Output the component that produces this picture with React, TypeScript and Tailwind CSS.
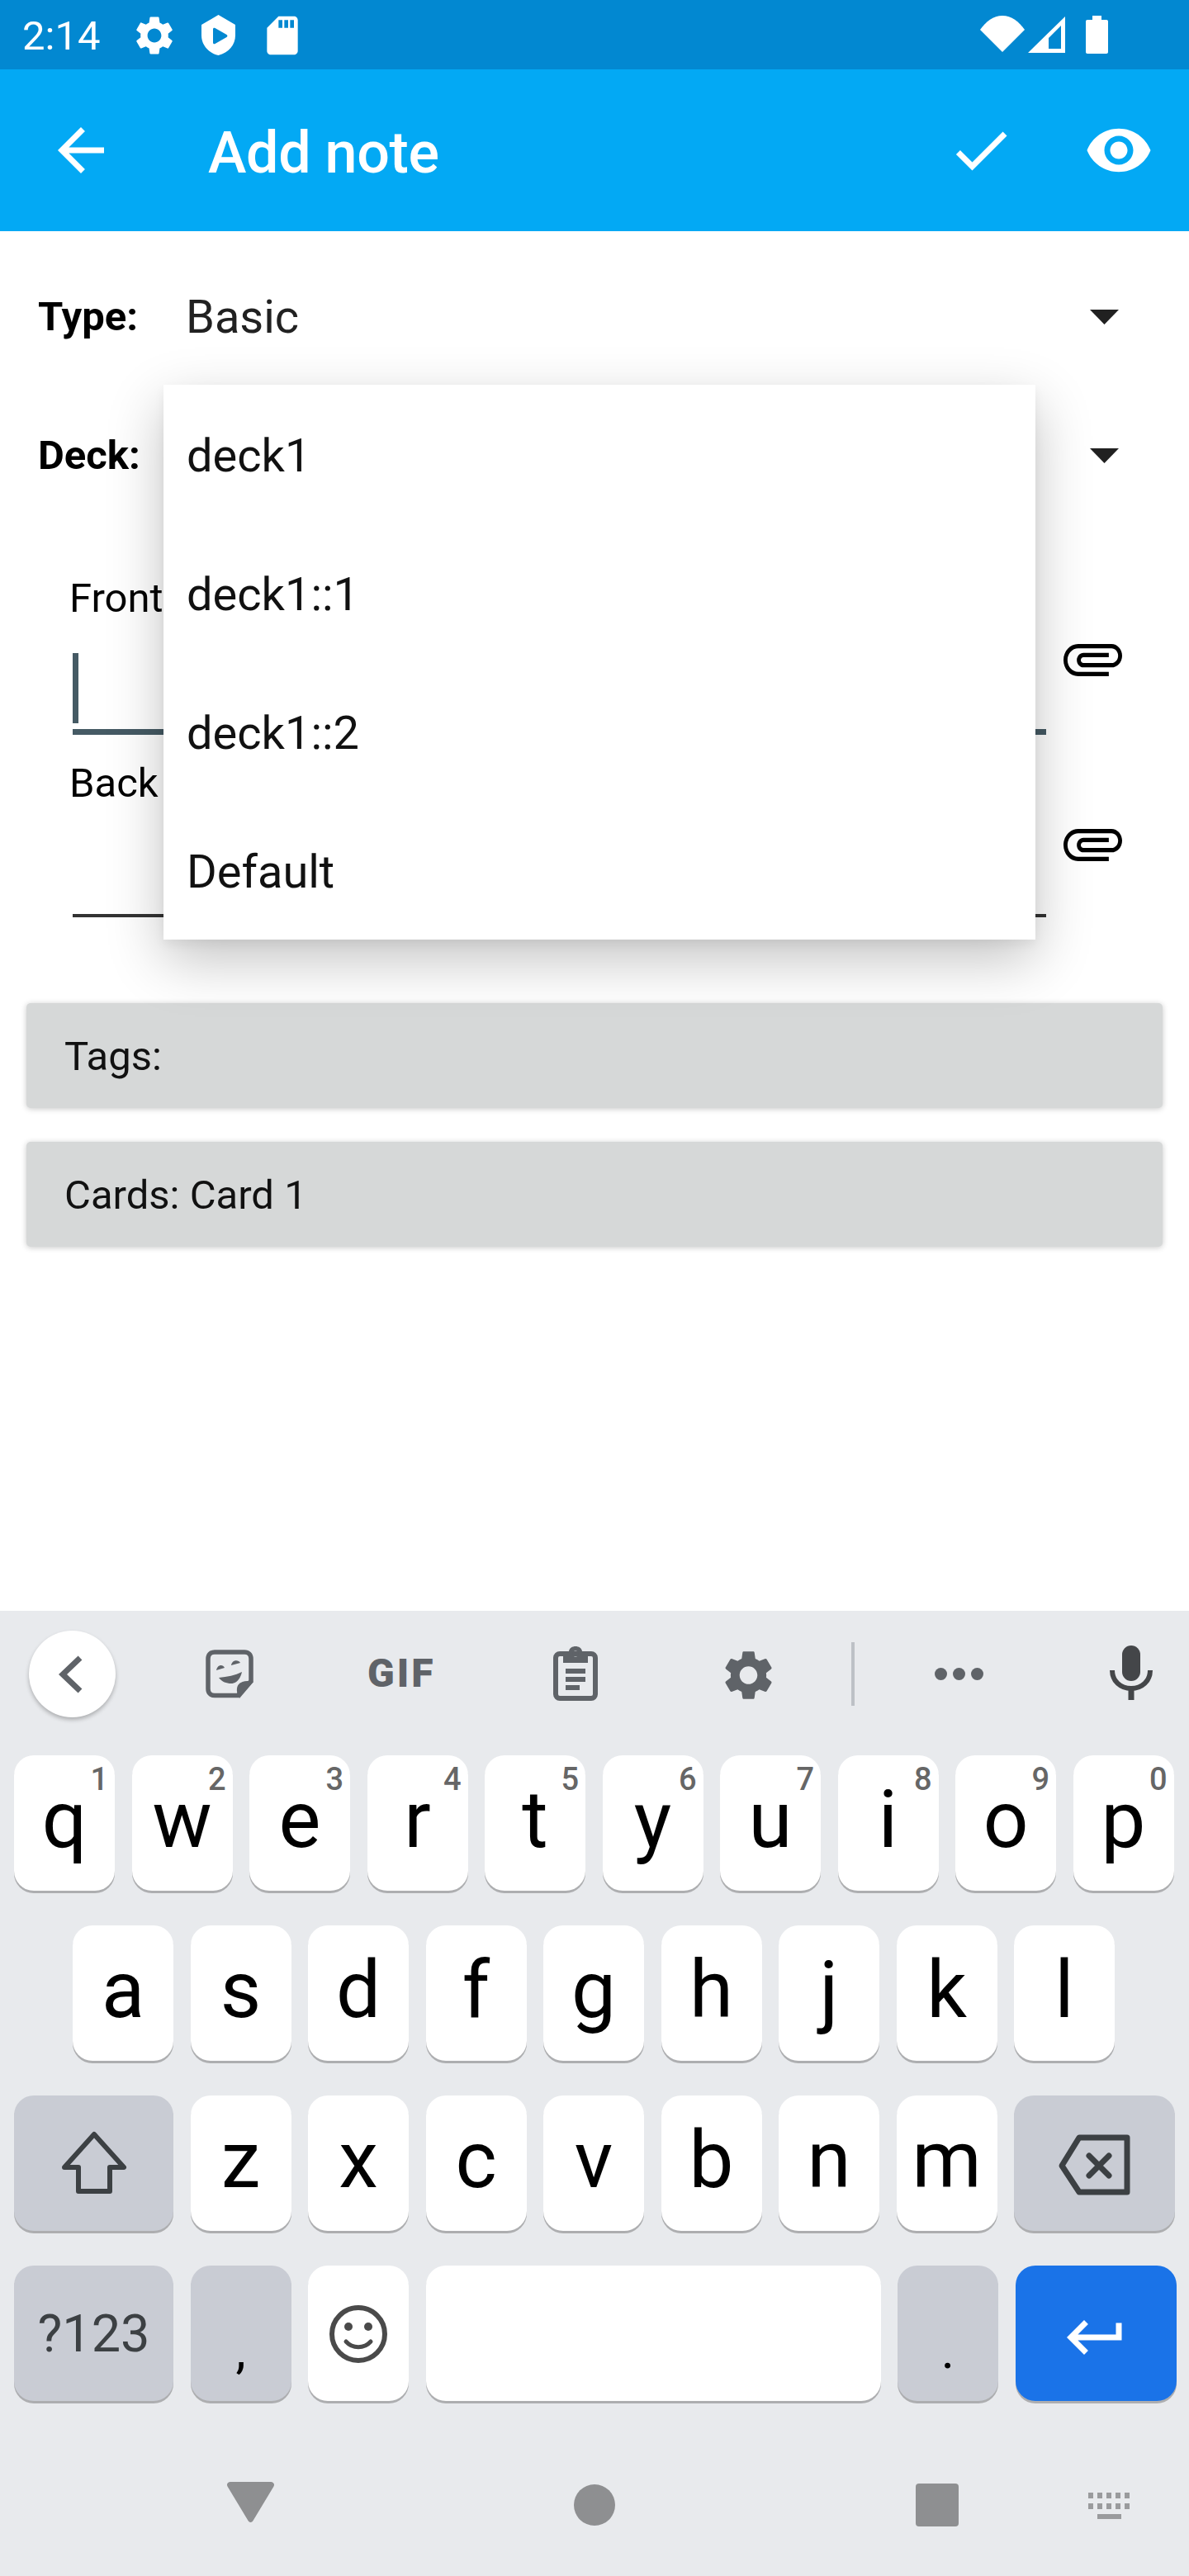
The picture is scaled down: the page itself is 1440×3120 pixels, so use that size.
import React from "react";

const GEAR =
  "M19.14 12.94c.04-.3.06-.61.06-.94 0-.32-.02-.64-.07-.94l2.03-1.58c.18-.14.23-.41.12-.61l-1.92-3.32c-.12-.22-.37-.29-.59-.22l-2.39.96c-.5-.38-1.03-.7-1.62-.94l-.36-2.54c-.04-.24-.24-.41-.48-.41h-3.84c-.24 0-.43.17-.47.41l-.36 2.54c-.59.24-1.13.57-1.62.94l-2.39-.96c-.22-.08-.47 0-.59.22L2.74 8.87c-.12.21-.08.47.12.61l2.03 1.58c-.05.3-.09.63-.09.94s.02.64.07.94l-2.03 1.58c-.18.14-.23.41-.12.61l1.92 3.32c.12.22.37.29.59.22l2.39-.96c.5.38 1.03.7 1.62.94l.36 2.54c.05.24.24.41.48.41h3.84c.24 0 .44-.17.47-.41l.36-2.54c.59-.24 1.13-.56 1.62-.94l2.39.96c.22.08.47 0 .59-.22l1.92-3.32c.12-.22.07-.47-.12-.61l-2.01-1.58zM12 15.6c-1.98 0-3.6-1.62-3.6-3.6s1.62-3.6 3.6-3.6 3.6 1.62 3.6 3.6-1.62 3.6-3.6 3.6z";
const ATTACH =
  "M16.5 6v11.5c0 2.21-1.79 4-4 4s-4-1.79-4-4V5c0-1.38 1.12-2.5 2.5-2.5s2.5 1.12 2.5 2.5v10.5c0 .55-.45 1-1 1s-1-.45-1-1V6H10v9.5c0 1.38 1.12 2.5 2.5 2.5s2.5-1.12 2.5-2.5V5c0-2.21-1.79-4-4-4S7 2.79 7 5v12.5c0 3.04 2.46 5.5 5.5 5.5s5.5-2.46 5.5-5.5V6h-1.5z";

function Attach({ className }: { className: string }) {
  return (
    <svg viewBox="1 7 22 11" preserveAspectRatio="none" className={className} fill="#000">
      <path d={ATTACH} transform="rotate(90 12 12)" />
    </svg>
  );
}

function StatusBar() {
  return (
    <div className="h-[84px] bg-[#0288d1] flex items-center text-white">
      <span className="ml-[27px] w-[132px] pt-[4px] text-[49px] leading-[80px]">2:14</span>
      <svg viewBox="0 0 24 24" className="w-[56px] h-[56px] fill-white mt-[1px]"><path d={GEAR} /></svg>
      <svg viewBox="0 0 41 49" className="ml-[29px] w-[41px] h-[49px] mt-[1px] fill-white">
        <path
          fillRule="evenodd"
          d="M20.5 0L41 12v13c0 11-8 21-20.5 24C8 46 0 36 0 25V12zM14 15.5v18c0 1.6 1.2 2.2 2.5 1.4l14-8c1.2-.8 1.2-2 0-2.8l-14-8c-1.3-.8-2.500-.2-2.500 1.4z"
        />
      </svg>
      <svg viewBox="0 0 24 24" className="ml-[29px] w-[56px] h-[56px] mt-[1px] fill-white">
        <path d="M18 2h-8L4.02 8 4 20c0 1.1.9 2 2 2h12c1.1 0 2-.9 2-2V4c0-1.1-.9-2-2-2zm-6 6h-2V4h2v4zm3 0h-2V4h2v4zm3 0h-2V4h2v4z" />
      </svg>
      <div className="ml-auto mr-[98px] flex items-center">
        <svg viewBox="0 0 54 44" className="w-[54px] h-[44px] fill-white -mt-[2px]">
          <path d="M27 44L0 17C7 7 16 0 27 0s20 7 27 17z" />
        </svg>
        <svg viewBox="0 0 45 44" className="ml-[4px] w-[45px] h-[44px] fill-white">
          <path fillRule="evenodd" d="M0 44L45 0v44zM25 26v13h15V11z" />
        </svg>
        <svg viewBox="0 0 27 46" className="ml-[25px] w-[27px] h-[46px] fill-white">
          <path d="M8 0h11v5h6c1.2 0 2 .8 2 2v37c0 1.2-.8 2-2 2H2c-1.2 0-2-.8-2-2V7c0-1.200.8-2 2-2h6z" />
        </svg>
      </div>
    </div>
  );
}

function Toolbar() {
  return (
    <div className="h-[196px] bg-[#03a9f4] flex items-center text-white">
      <svg viewBox="0 0 24 24" className="ml-[56px] w-[84px] h-[84px] fill-white">
        <path d="M20 11H7.83l5.59-5.59L12 4l-8 8 8 8 1.41-1.41L7.83 13H20v-2z" />
      </svg>
      <span className="ml-[112px] pt-[6px] text-[70px] font-medium leading-none tracking-[-0.3px]">Add note</span>
      <svg viewBox="0 0 24 24" className="ml-auto w-[84px] h-[84px] fill-white">
        <path d="M9 16.17L4.83 12l-1.42 1.41L9 19 21 7l-1.41-1.41z" />
      </svg>
      <svg viewBox="0 0 24 24" className="ml-[83px] mr-[43px] w-[84px] h-[84px] fill-white">
        <path d="M12 4.5C7 4.5 2.73 7.61 1 12c1.73 4.39 6 7.5 11 7.5s9.27-3.11 11-7.5c-1.73-4.39-6-7.5-11-7.5zM12 17c-2.76 0-5-2.24-5-5s2.24-5 5-5 5 2.24 5 5-2.24 5-5 5zm0-8c-1.66 0-3 1.34-3 3s1.34 3 3 3 3-1.34 3-3-1.34-3-3-3z" />
      </svg>
    </div>
  );
}

function SpinnerRow({ label, value }: { label: string; value?: string }) {
  return (
    <div className="h-[168px] flex items-center pl-[46px] pt-[4px]">
      <span className="w-[179px] text-[49px] font-bold text-black">{label}</span>
      <span className="text-[56px] text-[#212121]">{value}</span>
      <svg viewBox="0 0 35 18" className="ml-auto mr-[85px] w-[35px] h-[18px] fill-[#212121]">
        <path d="M0 0h35L17.5 18z" />
      </svg>
    </div>
  );
}

function NoteForm() {
  return (
    <div className="h-[1671px] bg-white relative pt-[18px]">
      <SpinnerRow label="Type:" value="Basic" />
      <SpinnerRow label="Deck:" />

      <div className="mt-[62px] pl-[84px] text-[49px] leading-[57px] text-black">Front</div>
      <div className="flex pl-[88px]">
        <div className="w-[1179px] h-[137px] border-b-[7px] border-[#455a64]">
          <div className="mt-[38px] w-[7px] h-[85px] bg-[#455a64]" />
        </div>
        <Attach className="ml-[21px] mt-[27px] w-[71px] h-[39px]" />
      </div>

      <div className="mt-[30px] pl-[84px] text-[49px] leading-[57px] text-black">Back</div>
      <div className="flex pl-[88px]">
        <div className="w-[1179px] h-[134px] border-b-[4px] border-[#333]" />
        <Attach className="ml-[21px] mt-[27px] w-[71px] h-[39px]" />
      </div>

      <div className="mt-[104px] mx-[32px] h-[127px] rounded-[5px] bg-[#d6d8d8] shadow-[0_1px_7px_rgba(0,0,0,0.22)] flex items-center pl-[46px] pt-[3px] text-[49px] text-[#111]">
        Tags:
      </div>
      <div className="mt-[41px] mx-[32px] h-[127px] rounded-[5px] bg-[#d6d8d8] shadow-[0_1px_7px_rgba(0,0,0,0.22)] flex items-center pl-[46px] pt-[3px] text-[49px] text-[#111]">
        Cards: Card 1
      </div>

      {/* dropdown sits over the form */}
      <div className="absolute left-[198px] top-[186px] w-[1056px] bg-white shadow-[0_24px_64px_rgba(0,0,0,0.24),0_6px_12px_rgba(0,0,0,0.05)]">
        {["deck1", "deck1::1", "deck1::2", "Default"].map((d) => (
          <div key={d} className="h-[168px] flex items-center pl-[28px] pr-[28px] pt-[4px] text-[56px] text-[#111]">
            {d}
          </div>
        ))}
      </div>
    </div>
  );
}

function SuggestStrip() {
  return (
    <div className="h-[175px] flex items-start pt-[38px]">
      <div className="ml-[35px] -mt-[14px] w-[105px] h-[105px] rounded-full bg-white shadow-[0_3px_5px_rgba(0,0,0,0.25)] flex items-center justify-center">
        <svg viewBox="0 0 30 46" className="w-[30px] h-[46px] -ml-[3px]" fill="none" stroke="#5f6368" strokeWidth="7">
          <path d="M26 3L5 23l21 20" />
        </svg>
      </div>
      {/* sticker */}
      <svg viewBox="0 0 60 60" className="ml-[109px] mt-[9px] w-[60px] h-[60px]" fill="none">
        <path
          d="M11 3h36c5 0 8 3 8 8v27L39 55.500H11c-5 0-8-3-8-8V11c0-5 3-8 8-8z"
          stroke="#5f6368"
          strokeWidth="5.500"
        />
        <path d="M58 39L41 59C37 52 37 46 40 42C44 38 50 37 58 39z" fill="#5f6368" />
        <path d="M16 34C26 33 36 31 44 27C42 36 37 41 31 41C25 41 20 39 16 34z" fill="#5f6368" />
        <path d="M13 25C14 18 21 17 23 22zM31 19C32 12 40 12 42 16z" fill="#5f6368" />
      </svg>
      <span className="ml-[136px] -mt-[7px] w-[82px] text-[48px] font-black tracking-[3px] text-[#5f6368] leading-[90px]">GIF</span>
      {/* clipboard */}
      <svg viewBox="0 0 56 66" className="ml-[142px] mt-[5px] w-[56px] h-[66px]" fill="none">
        <rect x="4" y="9" width="48" height="54" rx="5" stroke="#5f6368" strokeWidth="6" />
        <path fillRule="evenodd" d="M13 6h7c1-8 15-8 16 0h7v14H13zM28 5.500a3.500 3.500 0 100 7 3.500 3.500 0 000-7z" fill="#5f6368" />
        <path d="M16 30h24M16 40h24M16 50h17" stroke="#5f6368" strokeWidth="6" />
      </svg>
      <svg viewBox="2.300 2 19.400 20" className="ml-[152px] mt-[10px] w-[59px] h-[60px] fill-[#5f6368]"><path d={GEAR} /></svg>
      <div className="ml-[95px] w-[4px] h-[77px] bg-[#bdc1c6]" />
      <div className="ml-[97px] mt-[31px] flex gap-[7px]">
        <div className="w-[15px] h-[15px] rounded-full bg-[#5f6368]" />
        <div className="w-[15px] h-[15px] rounded-full bg-[#5f6368]" />
        <div className="w-[15px] h-[15px] rounded-full bg-[#5f6368]" />
      </div>
      <svg viewBox="0 0 52 66" className="ml-[153px] mt-[4px] w-[52px] h-[66px]" fill="none">
        <rect x="15" y="0" width="22" height="43" rx="11" fill="#444649" />
        <path d="M3 30c0 13 10 22 23 22s23-9 23-22" stroke="#444649" strokeWidth="6" />
        <path d="M26 50v16" stroke="#444649" strokeWidth="7" />
      </svg>
    </div>
  );
}

function Key({
  label,
  hint,
  grey,
  blue,
  w = "w-[122px]",
  text = "text-[96px] leading-[157px] text-black",
  children,
}: {
  label?: string;
  hint?: string;
  grey?: boolean;
  blue?: boolean;
  w?: string;
  text?: string;
  children?: React.ReactNode;
}) {
  const bg = blue ? "bg-[#1a73e8]" : grey ? "bg-[#c9ccd4]" : "bg-white";
  return (
    <div className={`${w} ${bg} h-[164px] rounded-[24px] shadow-[0_3px_0_#adaeb0] relative flex justify-center items-start shrink-0`}>
      {label && <span className={text}>{label}</span>}
      {children}
      {hint && (
        <span className="absolute right-[8px] top-[7px] text-[38px] leading-[44px] font-medium text-[#666]">{hint}</span>
      )}
    </div>
  );
}

function Keyboard() {
  const row1: [string, string][] = [
    ["q", "1"], ["w", "2"], ["e", "3"], ["r", "4"], ["t", "5"],
    ["y", "6"], ["u", "7"], ["i", "8"], ["o", "9"], ["p", "0"],
  ];
  return (
    <div className="h-[1169px] bg-[#e8eaed]">
      <SuggestStrip />
      <div className="flex gap-[20.5px] pl-[17px]">
        {row1.map(([k, n]) => (
          <Key key={k} label={k} hint={n} />
        ))}
      </div>
      <div className="mt-[42px] flex gap-[20.5px] pl-[88px]">
        {"asdfghjkl".split("").map((k) => (
          <Key key={k} label={k} />
        ))}
      </div>
      <div className="mt-[42px] flex gap-[20.5px] pl-[17px]">
        <Key grey w="w-[193px]">
          <svg viewBox="0 0 84 84" className="mt-[40px] w-[84px] h-[84px]" fill="none" stroke="#3c4043" strokeWidth="6" strokeLinejoin="round">
            <path d="M42 7l36 40H61v29H23V47H6z" />
          </svg>
        </Key>
        {"zxcvbnm".split("").map((k) => (
          <Key key={k} label={k} />
        ))}
        <Key grey w="w-[195px]">
          <svg viewBox="0 0 92 84" className="mt-[42px] w-[92px] h-[84px]" fill="none" stroke="#3c4043" strokeWidth="7" strokeLinejoin="round" strokeLinecap="round">
            <path d="M6 43L27 9h58v66H27z" />
            <path d="M39 31l24 24M63 31L39 55" />
          </svg>
        </Key>
      </div>
      <div className="mt-[42px] flex gap-[20.5px] pl-[17px]">
        <Key grey w="w-[193px]" label="?123" text="text-[63px] leading-[166px] text-[#3c4043]" />
        <Key grey label="," text="text-[62px] leading-[206px] text-black" />
        <Key>
          <svg viewBox="0 0 72 72" className="mt-[47px] w-[72px] h-[72px]" fill="none" stroke="#4a4a4a">
            <circle cx="36" cy="36" r="32" strokeWidth="6" />
            <circle cx="24" cy="27" r="5" fill="#4a4a4a" stroke="none" />
            <circle cx="48" cy="27" r="5" fill="#4a4a4a" stroke="none" />
            <path d="M21 45c8 9 22 9 30 0" strokeWidth="5" strokeLinecap="round" />
          </svg>
        </Key>
        <Key w="w-[551px]" />
        <Key grey label="." text="text-[62px] leading-[206px] text-black" />
        <Key blue w="w-[195px]">
          <svg viewBox="0 0 24 24" className="mt-[45px] w-[84px] h-[84px] fill-white">
            <path d="M19 7v4H5.830l3.580-3.590L8 6l-6 6 6 6 1.410-1.410L5.830 13H21V7z" />
          </svg>
        </Key>
      </div>
      <NavBar />
    </div>
  );
}

function NavBar() {
  return (
    <div className="mt-[98px] flex items-start pl-[275px]">
      <svg viewBox="0 0 57 49" className="w-[57px] h-[49px] fill-[#8e8f91]">
        <path d="M4 0h49c3 0 5 2.500 3.500 5.500L31.500 47c-1.500 2.500-4.500 2.500-6 0L.5 5.500C-1 2.500 1 0 4 0z" />
      </svg>
      <div className="ml-[363px] mt-[3px] w-[50px] h-[50px] rounded-full bg-[#8e8f91]" />
      <div className="ml-[364px] mt-[2px] w-[52px] h-[52px] rounded-[4px] bg-[#8e8f91]" />
      <div className="ml-[155px] mt-[13px] w-[54px] flex flex-col items-center gap-[6px]">
        <div className="flex gap-[5px]">
          {[0, 1, 2, 3, 4].map((i) => <div key={i} className="w-[6px] h-[7px] bg-[#9a9b9d]" />)}
        </div>
        <div className="flex gap-[5px]">
          {[0, 1, 2, 3, 4].map((i) => <div key={i} className="w-[6px] h-[7px] bg-[#9a9b9d]" />)}
        </div>
        <div className="w-[29px] h-[6px] bg-[#9a9b9d]" />
      </div>
    </div>
  );
}

export default function App() {
  return (
    <div className="w-[1440px] h-[3120px] overflow-hidden bg-white font-['Roboto',sans-serif]">
      <StatusBar />
      <Toolbar />
      <NoteForm />
      <Keyboard />
    </div>
  );
}
